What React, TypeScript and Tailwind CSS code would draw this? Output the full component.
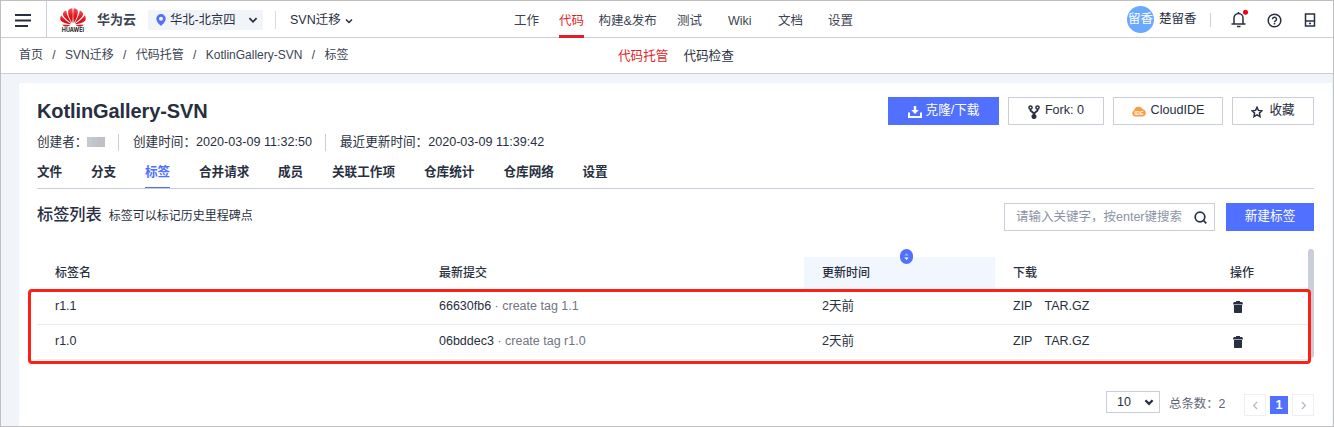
import React from "react";

function HuaweiMark() {
  return (
    <svg className="block h-[19px] w-[26px]" viewBox="0 0 26 20" preserveAspectRatio="none">
      <defs>
        <linearGradient id="petal" x1="0" y1="0" x2="0" y2="1">
          <stop offset="0" stopColor="#f0585c" />
          <stop offset="0.5" stopColor="#e3151d" />
          <stop offset="1" stopColor="#c40d16" />
        </linearGradient>
      </defs>
      <g fill="url(#petal)">
        <path d="M12.300 15.800C9.300 11.500 7.600 6.500 8.200 3C8.700 1.200 10.300 .4 12.300 .2C12.900 3.500 12.900 11 12.300 15.800Z" />
        <path d="M11.600 16C7 13.200 3.200 8.900 2.900 6.500C2.800 4.600 4.400 3.400 6.200 2.700C6.800 7.400 9.400 12.600 11.600 16Z" />
        <path d="M11 16.900C6 16.600 1.600 14.800 .6 12.800C-.2 10.900 .2 9.200 1.200 7.500C3.600 11.300 7.600 14.600 11 16.900Z" />
        <path d="M10.900 17.600C8 19.900 4.300 20.400 2.100 17.300C5.100 17.500 8 17.600 10.900 17.600Z" />
        <path d="M13.700 15.800C16.700 11.500 18.400 6.500 17.800 3C17.300 1.200 15.700 .4 13.700 .2C13.100 3.500 13.100 11 13.700 15.800Z" />
        <path d="M14.400 16C19 13.200 22.800 8.900 23.100 6.500C23.200 4.600 21.600 3.400 19.800 2.700C19.200 7.400 16.600 12.600 14.400 16Z" />
        <path d="M15 16.900C20 16.600 24.400 14.800 25.400 12.800C26.200 10.900 25.800 9.200 24.800 7.500C22.400 11.300 18.400 14.600 15 16.900Z" />
        <path d="M15.100 17.600C18 19.900 21.700 20.400 23.900 17.300C20.900 17.500 18 17.600 15.100 17.600Z" />
      </g>
    </svg>
  );
}

function Chevron({ dir, className }: { dir: "down" | "left" | "right"; className: string }) {
  const d = { down: "M2 3.500L5 6.500L8 3.500", left: "M6.800 1L3 5L6.800 9", right: "M3.200 1L7 5L3.200 9" }[dir];
  return (
    <svg className={className} viewBox="0 0 10 10" fill="none" stroke="currentColor">
      <path d={d} />
    </svg>
  );
}

function Trash() {
  return (
    <svg className="block h-3 w-[10px]" viewBox="0 0 10 12" fill="#282f40">
      <path d="M3 0h4v1h2.200l.8 2H0L.8 1H3z" />
      <path d="M0 3h10v1H0z" fill="#9da2af" />
      <path d="M1 4h8v7.200q0 .8-.8.8H1.800q-.8 0-.8-.8z" />
    </svg>
  );
}

const nav = [
  { label: "工作", w: "w-[45px]" },
  { label: "代码", w: "w-[39.500px]", active: true },
  { label: "构建&发布", w: "w-[78.500px]" },
  { label: "测试", w: "w-[51px]" },
  { label: "Wiki", w: "w-[50px]" },
  { label: "文档", w: "w-[50px]" },
  { label: "设置", w: "w-[40px]" },
];

const tabs = [
  { label: "文件", w: "w-[54px]" },
  { label: "分支", w: "w-[54px]" },
  { label: "标签", w: "w-[54px]", active: true },
  { label: "合并请求", w: "w-[79px]" },
  { label: "成员", w: "w-[54px]" },
  { label: "关联工作项", w: "w-[92px]" },
  { label: "仓库统计", w: "w-[79.500px]" },
  { label: "仓库网络", w: "w-[79px]" },
  { label: "设置", w: "w-[54px]" },
];

const tags = [
  { name: "r1.1", commit: "66630fb6", message: "create tag 1.1" },
  { name: "r1.0", commit: "06bddec3", message: "create tag r1.0" },
];

const crumbs = ["首页", "SVN迁移", "代码托管", "KotlinGallery-SVN", "标签"];

const columns = "grid grid-cols-[384px_383px_191px_217px_78px]";
const outlineButton = "flex h-7 items-center justify-center border border-[#c9ced9] bg-white";

function TopBar() {
  return (
    <header className="flex h-[37px] shrink-0 border-b border-[#c9ced9] bg-white text-[12.500px]">
      <div className="flex w-[46px] shrink-0 items-center border-r border-[#c9ced9] pl-[14px] pt-[3px]">
        <svg className="h-[13px] w-4" viewBox="0 0 16 13" stroke="#282f40" strokeWidth="1.800">
          <path d="M0 1h16M0 6.500h16M0 12h13" />
        </svg>
      </div>
      <div className="flex w-[50px] shrink-0 flex-col items-start pl-[13px] pt-[7px]">
        <HuaweiMark />
        <span className="w-[26px] text-center font-['Inter',sans-serif] text-[5.500px] leading-[6px] font-bold text-[#222]">HUAWEI</span>
      </div>
      <div className="w-[51px] shrink-0 pt-[9px] text-[13px] leading-5 font-bold text-[#3c4353]">华为云</div>
      <div className="mt-[9px] flex h-5 w-[115px] shrink-0 items-center bg-[#f1f5f9] pl-2">
        <svg className="h-3 w-[10px]" viewBox="0 0 10 12" fill="#5170ff" fillRule="evenodd">
          <path d="M5 0a4.700 4.700 0 0 0-4.700 4.700C.3 8 5 12 5 12S9.700 8 9.700 4.700A4.700 4.700 0 0 0 5 0zm0 2.700a2 2 0 1 1 0 4 2 2 0 0 1 0-4z" />
        </svg>
        <span className="ml-[4px] w-[77px] text-[12.300px] leading-[18px]">华北-北京四</span>
        <Chevron dir="down" className="h-3 w-3 stroke-[1.500]" />
      </div>
      <div className="mt-[10px] ml-[12px] h-[18px] w-px shrink-0 bg-[#d5d9e2]" />
      <div className="flex h-9 w-[224px] shrink-0 items-center pt-[2px] pl-[14px]">
        <span className="leading-5 whitespace-nowrap">SVN迁移</span>
        <Chevron dir="down" className="ml-[3px] mt-px h-[10px] w-[10px] stroke-[1.500]" />
      </div>
      <nav className="flex w-[613px] shrink-0 pl-[14px] text-[#3c4353]">
        {nav.map((n) => (
          <div key={n.label} className={`${n.w} shrink-0 whitespace-nowrap`}>
            <span className={n.active ? "inline-block h-[37px] border-b-[3px] border-[#e01f2b] pt-[10px] leading-5 text-[#e01f2b]" : "inline-block pt-[10px] leading-5"}>
              {n.label}
            </span>
          </div>
        ))}
      </nav>
      <div className="mt-[5px] ml-[14px] flex h-[27px] w-[27px] shrink-0 items-center justify-center rounded-full bg-[#6ba8ff] text-white">留香</div>
      <div className="ml-[5px] w-[51px] shrink-0 pt-[8px] leading-5">楚留香</div>
      <div className="mt-3 h-[14px] w-px shrink-0 bg-[#c9ced9]" />
      <svg className="mt-[8px] ml-[20px] h-[19px] w-[18px] shrink-0" viewBox="0 0 18 19" fill="none" stroke="#282f40" strokeWidth="1.500">
        <path d="M3 14.500V9a4.500 4.500 0 0 1 9 0v5.500M.5 15h14M6 17.500h3.500M7.500 3v2" />
        <circle cx="14.500" cy="3.300" r="2.500" fill="#f5000f" stroke="none" />
      </svg>
      <svg className="mt-[12px] ml-[18px] h-[15px] w-[15px] shrink-0" viewBox="0 0 15 15" fill="none" stroke="#282f40" strokeWidth="1.500">
        <circle cx="7.500" cy="7.500" r="6.300" />
        <path d="M5.500 6.200a2 2 0 1 1 3 1.700q-1 .6-1 1.300M7.500 10v1.500" />
      </svg>
      <svg className="mt-[12px] ml-[22px] h-[14px] w-3 shrink-0" viewBox="0 0 12 14" fill="none" stroke="#282f40" strokeWidth="1.500">
        <path d="M1.500 1h9v12h-9zM1.500 8h9M5 10.500h2" />
      </svg>
    </header>
  );
}

function SubBar() {
  return (
    <div className="flex h-[36px] shrink-0 border-b border-[#c9ced9] bg-white pt-[7px] leading-5">
      <div className="flex w-[617px] pl-[18px] text-[12px] text-[#3c4353]">
        {crumbs.map((c, i) => (
          <React.Fragment key={c}>
            {i > 0 && <span className="w-[22px] text-center">/</span>}
            <span className="whitespace-nowrap">{c}</span>
          </React.Fragment>
        ))}
      </div>
      <div className="flex gap-[15px] pt-px text-[12.600px]">
        <span className="text-[#e01f2b]">代码托管</span>
        <span>代码检查</span>
      </div>
    </div>
  );
}

function RepoHeader() {
  return (
    <div className="flex justify-between">
      <div>
        <h1 className="pt-[13px] text-[20px] leading-[30px] font-bold tracking-[-0.100px]">KotlinGallery-SVN</h1>
        <div className="mt-[7px] flex h-[18px] items-center text-[12.600px] whitespace-nowrap">
          <span className="w-[50px]">创建者：</span>
          <span className="flex h-[10px] w-[18px]">
            <i className="w-[5px] bg-[#c8c8cb]" />
            <i className="w-[5px] bg-[#bcc5d0]" />
            <i className="w-[8px] bg-[#c3bfc4]" />
          </span>
          <span className="ml-[13px] h-[17px] w-px bg-[#c9ced9]" />
          <span className="ml-[14px] w-[192px]">创建时间：2020-03-09 11:32:50</span>
          <span className="h-[17px] w-px bg-[#c9ced9]" />
          <span className="ml-[14px]">最近更新时间：2020-03-09 11:39:42</span>
        </div>
      </div>
      <div className="flex gap-[9px] pt-[14px] text-[12.600px]">
        <button className="flex h-7 w-[111px] items-center justify-center gap-1 bg-[#5170ff] pb-[2px] text-white">
          <svg className="mt-[3px] h-3 w-[14px]" viewBox="0 0 14 12">
            <path d="M1 6.500V11h12V6.500" fill="none" stroke="white" strokeWidth="2" />
            <path d="M5.800 0h2.400v4h2.600L7 8 3.200 4h2.600z" fill="white" />
          </svg>
          克隆/下载
        </button>
        <button className={`${outlineButton} w-[96px] gap-[5px] pb-[2px]`}>
          <svg className="mt-[3px] h-[14px] w-3" viewBox="0 0 12 14" fill="none" stroke="#282f40" strokeWidth="1.500">
            <circle cx="2.500" cy="2.500" r="1.600" />
            <circle cx="9.500" cy="2.500" r="1.600" />
            <path d="M2.500 4v1.500L6 8.500 9.500 5.500V4M6 8v3" strokeWidth="1.800" />
            <circle cx="6" cy="11.500" r="1.800" fill="#282f40" />
          </svg>
          Fork: 0
        </button>
        <button className={`${outlineButton} w-[110px] gap-[5px] pb-[2px]`}>
          <svg className="mt-[3px] h-[11px] w-[14px]" viewBox="0 0 14 11">
            <path d="M3 10.500A3.300 3.300 0 0 1 2.200 4.200 4.600 4.600 0 0 1 10.800 3.300 3.700 3.700 0 0 1 11 10.500z" fill="#ff9a42" />
            <text x="7" y="9" textAnchor="middle" fontSize="5.500" fontWeight="700" fill="white">IDE</text>
          </svg>
          CloudIDE
        </button>
        <button className={`${outlineButton} w-[82px] gap-[6px] pb-[2px]`}>
          <svg className="mt-[3px] h-3 w-3" viewBox="0 0 12 12" fill="none" stroke="#282f40" strokeWidth="1.500">
            <path d="M6 1.300L7.400 4.400L10.900 4.800L8.400 7.100L9 10.600L6 8.900L3 10.600L3.600 7.100L1.100 4.800L4.600 4.400Z" />
          </svg>
          收藏
        </button>
      </div>
    </div>
  );
}

function TagTable() {
  return (
    <div className="relative mt-[18px] flex h-[109px] justify-between text-[12px]">
      <div className="w-[1271px]">
        <div className={`${columns} mt-[8px] h-[33px] leading-[32px] font-medium`}>
          <span className="pl-[18px]">标签名</span>
          <span className="pl-[18px]">最新提交</span>
          <span className="relative bg-[#f2f7ff] pl-[18px]">
            更新时间
            <svg className="absolute top-[-8px] left-[96px] h-[15px] w-[13px]" viewBox="0 0 13 15">
              <rect width="13" height="15" rx="6.500" fill="#5170ff" />
              <path d="M4.500 6.500L6.500 4.200L8.500 6.500z" fill="#a7b7ff" />
              <path d="M4.300 8.500h4.400L6.500 11z" fill="white" />
            </svg>
          </span>
          <span className="pl-[18px]">下载</span>
          <span className="pl-[18px]">操作</span>
        </div>
        {tags.map((t) => (
          <div key={t.name} className={`${columns} h-[35px] border-b border-[#e9ecf3] leading-[32px]`}>
            <span className="pl-[18px] text-[12.500px]">{t.name}</span>
            <span className="pl-[18px] text-[12.500px]">
              {t.commit}
              <span className="text-[#71757f]"> · {t.message}</span>
            </span>
            <span className="pl-[18px] text-[12.600px]">2天前</span>
            <span className="flex gap-3 pl-[18px] text-[12.500px]">
              <span>ZIP</span>
              <span>TAR.GZ</span>
            </span>
            <span className="pt-[11px] pl-[21px]">
              <Trash />
            </span>
          </div>
        ))}
      </div>
      <div className="h-[109px] w-[6px] rounded-[3px] bg-[#c9ced9]" />
      <div className="absolute top-[40px] -left-[9px] h-[75px] w-[1283px] rounded-[4px] border-[3px] border-[#ff1f14]" />
    </div>
  );
}

export default function App() {
  return (
    <div className="flex h-[427px] w-[1334px] flex-col overflow-hidden border border-[#bfbfbf] bg-[#f1f5f9] font-['Liberation_Sans','Noto_Sans_CJK_SC',sans-serif] text-[#282f40]">
      <TopBar />
      <SubBar />
      <main className="mt-[9px] mr-px ml-[18px] flex grow flex-col bg-white pr-[18px] pl-[18px]">
        <RepoHeader />
        <div className="mt-[9px] flex h-[29px] shrink-0 border-b border-[#c9ced9] text-[12.600px] font-bold">
          {tabs.map((t) => (
            <div key={t.label} className={t.w}>
              <span className={t.active ? "inline-block h-[28px] border-b border-[#5170ff] leading-[25px] text-[#5170ff]" : "inline-block leading-[25px]"}>{t.label}</span>
            </div>
          ))}
        </div>
        <div className="mt-[14px] flex h-7 shrink-0">
          <h2 className="text-[16.200px] leading-[23px] font-medium">标签列表</h2>
          <span className="ml-[7px] text-[12px] leading-[26px]">标签可以标记历史里程碑点</span>
          <div className="ml-auto flex h-7 w-[211px] items-center border border-[#c9ced9] pl-[11px]">
            <span className="w-[178px] text-[12.500px] whitespace-nowrap text-[#8b93a7]">请输入关键字，按enter键搜索</span>
            <svg className="h-[13px] w-[13px] shrink-0" viewBox="0 0 13 13" fill="none" stroke="#282f40" strokeWidth="1.700">
              <circle cx="6" cy="6" r="4.800" />
              <path d="M9 9l3.300 3.300" />
            </svg>
          </div>
          <button className="ml-[11px] h-7 w-[88px] bg-[#5170ff] text-[12.700px] text-white">新建标签</button>
        </div>
        <TagTable />
        <div className="mt-[33px] flex items-start justify-end text-[12px]">
          <div className="flex h-[22px] w-[54px] items-center justify-between border border-[#c9ced9] pr-[4px] pl-[10px] text-[12.500px]">
            10
            <Chevron dir="down" className="h-3 w-3 stroke-[1.900]" />
          </div>
          <span className="ml-[9px] w-[75px] pt-[3px] text-[12.400px] leading-5 text-[#5f6678]">总条数：2</span>
          <div className="mt-[3px] flex h-[22px] w-[22px] items-center justify-center border border-[#eceef3] text-[#b4b9c5]">
            <Chevron dir="left" className="h-[9px] w-[9px] stroke-[1.500]" />
          </div>
          <div className="mt-[5px] ml-1 flex h-[18px] w-[18px] items-center justify-center bg-[#5170ff] text-[12.500px] font-bold text-white">1</div>
          <div className="mt-[3px] ml-1 flex h-[22px] w-[22px] items-center justify-center border border-[#eceef3] text-[#b4b9c5]">
            <Chevron dir="right" className="h-[9px] w-[9px] stroke-[1.500]" />
          </div>
        </div>
      </main>
    </div>
  );
}
